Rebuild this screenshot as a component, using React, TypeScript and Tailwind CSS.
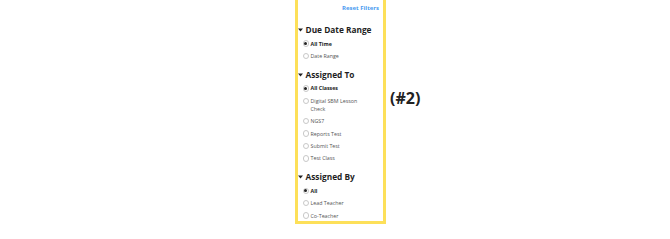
type Option = { label: string; checked?: boolean };

type Group = { title: string; options: Option[] };

const groups: Group[] = [
  {
    title: 'Due Date Range',
    options: [{ label: 'All Time', checked: true }, { label: 'Date Range' }],
  },
  {
    title: 'Assigned To',
    options: [
      { label: 'All Classes', checked: true },
      { label: 'Digital SBM Lesson Check' },
      { label: 'NGS7' },
      { label: 'Reports Test' },
      { label: 'Submit Test' },
      { label: 'Test Class' },
    ],
  },
  {
    title: 'Assigned By',
    options: [{ label: 'All', checked: true }, { label: 'Lead Teacher' }, { label: 'Co-Teacher' }],
  },
];

function Radio({ checked }: { checked?: boolean }) {
  return (
    <span className="mt-[0.75px] flex h-[6.5px] w-[6.5px] shrink-0 items-center justify-center rounded-full border-[0.8px] border-[#c8c8c8] bg-white">
      {checked && <span className="h-[3px] w-[3px] rounded-full bg-[#222]" />}
    </span>
  );
}

function FilterGroup({ group }: { group: Group }) {
  return (
    <div className="mt-[10px] first:mt-0">
      <div className="flex h-[10px] items-center">
        <svg width="5" height="4" viewBox="0 0 5 4" className="ml-[-0.5px] mr-[3px]">
          <path d="M0 0.5 L5 0.5 L2.5 3.5 Z" fill="#222" />
        </svg>
        <h3 className="text-[8.3px] font-bold leading-[10px] text-[#1f1f1f]">{group.title}</h3>
      </div>
      <div className="mt-[4.5px] flex flex-col gap-[4.4px] pl-[4.5px] pr-[14px]">
        {group.options.map((o) => (
          <label key={o.label} className="flex items-start gap-[1.5px]">
            <Radio checked={o.checked} />
            <span
              className={
                o.checked
                  ? 'text-[5.3px] font-bold leading-[8px] text-[#222]'
                  : 'text-[5.3px] leading-[8px] text-[#555]'
              }
            >
              {o.label}
            </span>
          </label>
        ))}
      </div>
    </div>
  );
}

export default function App() {
  return (
    <div
      className="flex h-[239px] w-[670px] items-start bg-white"
      style={{ fontFamily: '"Open Sans", "DejaVu Sans", sans-serif' }}
    >
      <div className="ml-[295px] w-[91px] border-x-[3px] border-b-[3px] border-[#fde059] pb-[1px] pt-[4px]">
        <div className="flex justify-end pr-[4px]">
          <button className="text-[6px] font-bold leading-[8px] text-[#4a9bf0]">Reset Filters</button>
        </div>
        <div className="mt-[13px]">
          {groups.map((g) => (
            <FilterGroup key={g.title} group={g} />
          ))}
        </div>
      </div>
      <div className="ml-[4px] mt-[87px] text-[16px] font-bold leading-[22px] text-[#222]">(#2)</div>
    </div>
  );
}
